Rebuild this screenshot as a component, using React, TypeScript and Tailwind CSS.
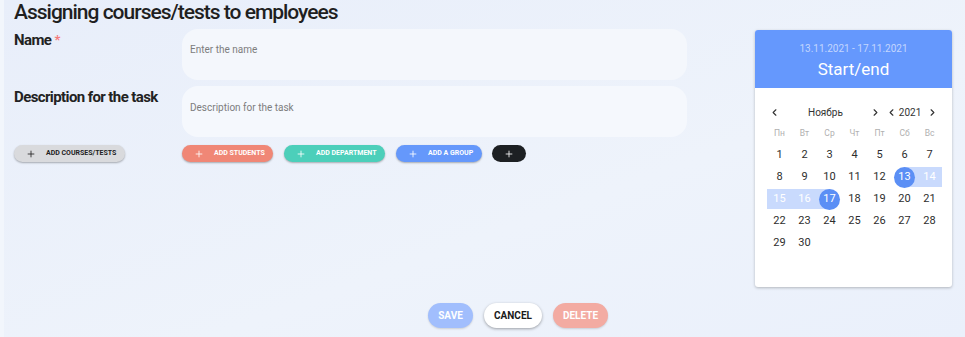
import { Plus, ChevronLeft, ChevronRight } from "lucide-react";

const weekDays = ["Пн", "Вт", "Ср", "Чт", "Пт", "Сб", "Вс"];

const weeks: (number | null)[][] = [
  [1, 2, 3, 4, 5, 6, 7],
  [8, 9, 10, 11, 12, 13, 14],
  [15, 16, 17, 18, 19, 20, 21],
  [22, 23, 24, 25, 26, 27, 28],
  [29, 30, null, null, null, null, null],
];

function DayCell({ day }: { day: number | null }) {
  if (day === null) return <div className="h-[20px]" />;
  const isStart = day === 13;
  const isEnd = day === 17;
  const inRange = day > 13 && day < 17;
  let band = "";
  if (isStart) band = "bg-[linear-gradient(to_right,transparent_50%,#c9dafd_50%)]";
  if (isEnd) band = "bg-[linear-gradient(to_right,#c9dafd_50%,transparent_50%)]";
  if (inRange) band = "bg-[#c9dafd]";
  return (
    <div className={`h-[20px] flex items-center justify-center ${band}`}>
      {isStart || isEnd ? (
        <span className="w-[21px] h-[21px] rounded-full bg-[#5b8ff5] text-white flex items-center justify-center">
          {day}
        </span>
      ) : (
        <span className={inRange ? "text-white" : "text-[#2e2e2e]"}>{day}</span>
      )}
    </div>
  );
}

function Calendar() {
  return (
    <div className="w-[197px] h-[257px] rounded-[3px] bg-white shadow-[0_1px_3px_rgba(0,0,0,0.25)] overflow-hidden font-['Roboto',sans-serif]">
      <div className="h-[58px] bg-[#6598fd] flex flex-col items-center pt-[12px]">
        <p className="text-[10px] leading-[13px] text-[#c3d6fd]">13.11.2021 - 17.11.2021</p>
        <p className="text-[17px] leading-[22px] text-white mt-[3px]">Start/end</p>
      </div>
      <div className="pl-[12px] pr-[10px]">
        <div className="flex items-center h-[16px] mt-[16px] text-[10px] text-[#333]">
          <ChevronLeft size={11} strokeWidth={2.5} className="ml-[2px]" />
          <span className="ml-[28px]">Ноябрь</span>
          <ChevronRight size={11} strokeWidth={2.5} className="ml-[27px]" />
          <ChevronLeft size={11} strokeWidth={2.5} className="ml-[5px]" />
          <span className="ml-[2px]">2021</span>
          <ChevronRight size={11} strokeWidth={2.5} className="ml-[6px]" />
        </div>
        <div className="grid grid-cols-7 mt-[7px] text-[8.5px] text-[#b0b0b0] h-[12px] items-center">
          {weekDays.map((d) => (
            <div key={d} className="text-center">
              {d}
            </div>
          ))}
        </div>
        <div className="mt-[6px] flex flex-col gap-[2px] text-[11px]">
          {weeks.map((w, i) => (
            <div key={i} className="grid grid-cols-7">
              {w.map((d, j) => (
                <DayCell key={j} day={d} />
              ))}
            </div>
          ))}
        </div>
      </div>
    </div>
  );
}

function PillButton({ label, className, width }: { label: string; className: string; width: string }) {
  return (
    <button
      className={`h-[17px] ${width} rounded-full flex items-center pl-[12px] gap-[10px] text-[7px] font-bold uppercase shadow-[0_1px_2px_rgba(0,0,0,0.3)] ${className}`}
    >
      <Plus size={10} strokeWidth={2} />
      <span>{label}</span>
    </button>
  );
}

export default function App() {
  return (
    <div className="w-[965px] h-[337px] flex bg-[#e9effa] font-['Roboto',sans-serif] overflow-hidden">
      <div className="w-[4px] bg-[#f2f6fc]" />
      <div className="flex-1 flex flex-col bg-[linear-gradient(160deg,#e8eefa_0%,#eef3fb_60%,#eaf0fb_100%)]">
        <div className="flex">
          <div className="flex-1 pl-[10px]">
            <h1 className="text-[21px] leading-[26px] tracking-[-1px] font-medium text-[#1f1f1f] mt-[-1px] whitespace-nowrap">
              Assigning courses/tests to employees
            </h1>
            <div className="grid grid-cols-[168px_505px] gap-y-[6px] mt-[4px]">
              <div className="text-[15px] font-bold text-[#222] leading-[20px] pt-[1px] tracking-[-0.6px]">
                Name <span className="text-[#f47a7a] text-[13px] align-top">*</span>
              </div>
              <div className="h-[51px] rounded-[16px] bg-[#f4f7fc] pl-[8px] pt-[15px] text-[10px] text-[#7d7d7d] leading-[12px]">
                Enter the name
              </div>
              <div className="text-[15px] font-bold text-[#222] leading-[20px] pt-[1px] tracking-[-0.6px]">
                Description for the task
              </div>
              <div className="h-[51px] rounded-[16px] bg-[#f5f8fd] pl-[8px] pt-[16px] text-[10px] text-[#7d7d7d] leading-[12px]">
                Description for the task
              </div>
            </div>
            <div className="flex items-center mt-[8px]">
              <PillButton label="Add courses/tests" width="w-[111px]" className="bg-[#d9dadd] text-[#222]" />
              <div className="w-[57px]" />
              <PillButton label="Add students" width="w-[91px]" className="bg-[#f08776] text-white" />
              <div className="w-[11px]" />
              <PillButton label="Add department" width="w-[101px]" className="bg-[#4ccfba] text-white" />
              <div className="w-[11px]" />
              <PillButton label="Add a group" width="w-[86px]" className="bg-[#6598fb] text-white" />
              <div className="w-[10px]" />
              <button className="h-[17px] w-[34px] rounded-full bg-[#1d2023] text-white flex items-center justify-center">
                <Plus size={10} strokeWidth={2} />
              </button>
            </div>
          </div>
          <div className="pt-[30px] pr-[13px]">
            <Calendar />
          </div>
        </div>
        <div className="flex items-center pl-[424px] mt-[16px] gap-[11px] text-[10px] font-bold">
          <button className="h-[25px] w-[45px] rounded-full bg-[#a1befd] text-white uppercase shadow-[0_1px_2px_rgba(0,0,0,0.15)]">
            Save
          </button>
          <button className="h-[25px] w-[58px] rounded-full bg-white text-[#1a1a1a] uppercase shadow-[0_1px_3px_rgba(0,0,0,0.35)]">
            Cancel
          </button>
          <button className="h-[25px] w-[55px] rounded-full bg-[#f3aba2] text-white uppercase shadow-[0_1px_2px_rgba(0,0,0,0.15)]">
            Delete
          </button>
        </div>
      </div>
    </div>
  );
}
